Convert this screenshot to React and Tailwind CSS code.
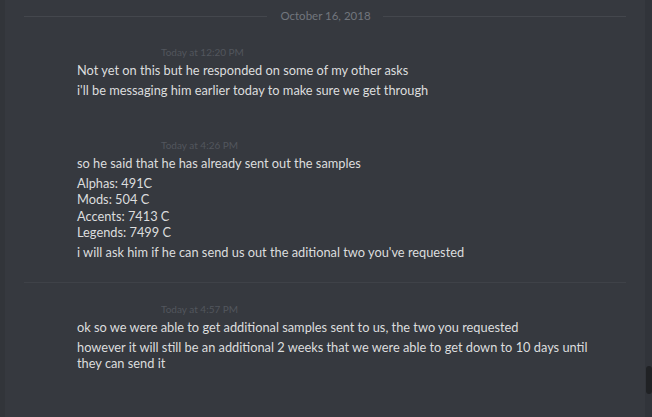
const groups = [
  {
    time: "Today at 12:20 PM",
    messages: [
      ["Not yet on this but he responded on some of my other asks"],
      ["i'll be messaging him earlier today to make sure we get through"],
    ],
  },
  {
    time: "Today at 4:26 PM",
    messages: [
      ["so he said that he has already sent out the samples"],
      ["Alphas: 491C", "Mods: 504 C", "Accents: 7413 C", "Legends: 7499 C"],
      ["i will ask him if he can send us out the aditional two you've requested"],
    ],
  },
  {
    time: "Today at 4:57 PM",
    messages: [
      ["ok so we were able to get additional samples sent to us, the two you requested"],
      [
        "however it will still be an additional 2 weeks that we were able to get down to 10 days until they can send it",
      ],
    ],
  },
];

function Grupo({ grupo }) {
  return (
    <div className="pl-[77px]">
      <div className="ml-[84px] text-[10px] leading-[12px] text-[#52565d]">{grupo.time}</div>
      <div className="mt-[4px] w-[520px] flex flex-col gap-[3px]">
        {grupo.messages.map((lineas, i) => (
          <div key={i} className="text-[12.8px] leading-[16.5px] text-[#dcddde]">
            {lineas.map((l, j) => (
              <div key={j}>{l}</div>
            ))}
          </div>
        ))}
      </div>
    </div>
  );
}

export default function App() {
  return (
    <div
      className="relative w-[652px] h-[417px] overflow-hidden bg-[#36393f] flex"
      style={{ fontFamily: "Lato, 'Open Sans', sans-serif" }}
    >
      <div className="w-[5px] bg-[#32353a]" />
      <div className="flex-1 pr-[6px]">
        {/* separador de fecha */}
        <div className="flex items-center ml-[19px] mr-[20px] mt-[9px]">
          <div className="flex-1 h-px bg-[#44474d]" />
          <div className="pl-[13px] pr-[12px] text-[11.5px] leading-[14px] text-[#72767d]">October 16, 2018</div>
          <div className="flex-1 h-px bg-[#44474d]" />
        </div>

        <div className="mt-[23px] -ml-[5px]">
          <Grupo grupo={groups[0]} />
        </div>

        <div className="mt-[41px] -ml-[5px]">
          <Grupo grupo={groups[1]} />
        </div>

        <div className="mt-[22px] ml-[19px] mr-[20px] h-px bg-[#3f4248]" />

        <div className="mt-[20px] -ml-[5px]">
          <Grupo grupo={groups[2]} />
        </div>
      </div>

      {/* barra de scroll */}
      <div className="absolute right-0 top-0 bottom-0 w-[7px] bg-[#31343a]">
        <div className="absolute left-[1px] right-0 top-[366px] h-[28px] rounded-[3px] bg-[#202225]" />
      </div>
    </div>
  );
}
